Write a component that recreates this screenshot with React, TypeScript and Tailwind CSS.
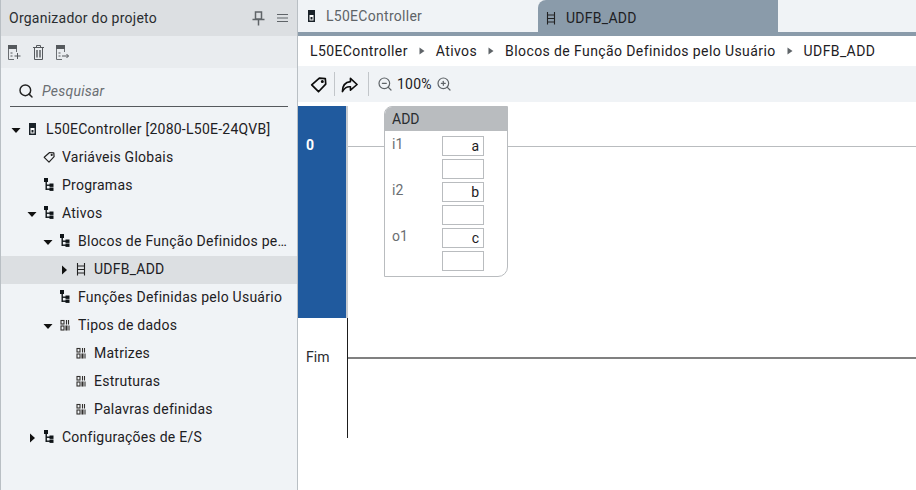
import { Search, ZoomIn, ZoomOut } from 'lucide-react'

function Caret({ dir }: { dir: 'down' | 'right' | 'none' }) {
  if (dir === 'none') return <span className="w-[16px] shrink-0" />
  return (
    <span className="w-[16px] shrink-0 flex items-center">
      <svg width="10" height="10" viewBox="0 0 10 10">
        {dir === 'down' ? <path d="M0.5 3h9L5 8z" fill="#111" /> : <path d="M3 0.5l5 4.5-5 4.5z" fill="#111" />}
      </svg>
    </span>
  )
}

function ControllerIcon() {
  return (
    <svg width="12" height="14" viewBox="0 0 12 14">
      <rect x="2" y="1" width="7" height="12" fill="#1a2229" />
      <rect x="3.5" y="6" width="4" height="5.5" fill="#fff" />
      <rect x="4.5" y="8" width="2" height="2.5" fill="#1a2229" />
    </svg>
  )
}

function TreeIcon() {
  return (
    <svg width="12" height="14" viewBox="0 0 12 14">
      <rect x="1" y="0" width="4" height="4" fill="#0f1418" />
      <rect x="2.5" y="4" width="1.4" height="8" fill="#0f1418" />
      <rect x="3" y="6.5" width="5" height="1.4" fill="#0f1418" />
      <rect x="3" y="10.5" width="5" height="1.4" fill="#0f1418" />
      <rect x="6.5" y="5.5" width="4" height="3.4" fill="#0f1418" />
      <rect x="6.5" y="9.5" width="4" height="3.4" fill="#0f1418" />
    </svg>
  )
}

function LadderIcon() {
  return (
    <svg width="12" height="14" viewBox="0 0 12 14" fill="none" stroke="#222" strokeWidth="1.1">
      <path d="M2.5 1v12.5M9.5 1v12.5M2.5 4h7M2.5 7.5h7M2.5 11h7" />
    </svg>
  )
}

function GridIcon() {
  return (
    <svg width="10" height="12" viewBox="0 0 10 12" fill="none" stroke="#33302e" strokeWidth="1.1">
      <rect x="1" y="1.5" width="3" height="3.5" />
      <path d="M6.5 1v4.5M8.5 1v4.5" />
      <rect x="1" y="7" width="3" height="4" />
      <rect x="6" y="7" width="1" height="4" />
      <path d="M9 6.5v5" />
    </svg>
  )
}

function TagSmall() {
  return (
    <svg width="14" height="14" viewBox="0 0 20 20" fill="none" stroke="#222" strokeWidth="2" strokeLinejoin="round">
      <path d="M2 10.5L11 2.5L18 3L18.5 9.5L10 18.5Z" />
      <circle cx="14.5" cy="6.5" r="0.8" fill="#222" />
    </svg>
  )
}

function TagOutline() {
  return (
    <svg width="17" height="17" viewBox="0 0 20 20" fill="none" stroke="#0c0c0c" strokeWidth="2" strokeLinejoin="round">
      <path d="M2 10.5L11 2.5L18 3L18.5 9.5L10 18.5Z" />
      <circle cx="14.5" cy="6.5" r="0.8" fill="#0c0c0c" />
    </svg>
  )
}

function ShareIcon() {
  return (
    <svg width="17" height="17" viewBox="0 0 18 18" fill="none" stroke="#0c0c0c" strokeWidth="1.7" strokeLinejoin="round">
      <path d="M10 2.5L17 9L10 15V11.5C6 11 3.5 13 1.5 16.5C1.5 10 5 6.5 10 6Z" />
    </svg>
  )
}

function PinIcon() {
  return (
    <svg width="13" height="15" viewBox="0 0 13 15" fill="none" stroke="#5f6468" strokeWidth="1.5">
      <path d="M3.5 1h6v7h-6zM0.5 8.5h12M6.5 8.5v6" />
    </svg>
  )
}

function MenuIcon() {
  return (
    <svg width="11" height="8" viewBox="0 0 11 8" stroke="#5f6468" strokeWidth="1">
      <path d="M0 0.5h11M0 4h11M0 7.5h11" />
    </svg>
  )
}

function DocIcon({ kind }: { kind: 'add' | 'export' }) {
  return (
    <svg width="13" height="15" viewBox="0 0 13 15" fill="none">
      <path d="M0.5 0.5h8v14h-8z" fill="#e9ecef" stroke="#6a6e72" />
      <rect x="0" y="0" width="9" height="4" fill="#55595d" />
      <path d="M2.5 8h2M2.5 11h2" stroke="#55595d" />
      <rect x="6" y="7" width="7" height="8" fill="#e9ecef" />
      {kind === 'add' ? (
        <path d="M6.5 11h6M9.5 8v6" stroke="#55595d" />
      ) : (
        <path d="M6 11h6.5M10.5 9l2 2-2 2" stroke="#55595d" />
      )}
    </svg>
  )
}

function TrashIcon() {
  return (
    <svg width="11" height="15" viewBox="0 0 11 15" fill="none" stroke="#55595d">
      <path d="M0 2.5h11M3.5 2V0.5h4V2" />
      <path d="M1.5 3v11.5h8V3" />
      <path d="M4 5v7.5M7 5v7.5" strokeWidth="1.4" />
    </svg>
  )
}

const rows = [
  { label: 'L50EController [2080-L50E-24QVB]', depth: 0, caret: 'down', icon: 'controller' },
  { label: 'Variáveis Globais', depth: 1, caret: 'none', icon: 'tag' },
  { label: 'Programas', depth: 1, caret: 'none', icon: 'tree' },
  { label: 'Ativos', depth: 1, caret: 'down', icon: 'tree' },
  { label: 'Blocos de Função Definidos pelo Usuário', depth: 2, caret: 'down', icon: 'tree' },
  { label: 'UDFB_ADD', depth: 3, caret: 'right', icon: 'ladder', selected: true },
  { label: 'Funções Definidas pelo Usuário', depth: 2, caret: 'none', icon: 'tree' },
  { label: 'Tipos de dados', depth: 2, caret: 'down', icon: 'grid' },
  { label: 'Matrizes', depth: 3, caret: 'none', icon: 'grid' },
  { label: 'Estruturas', depth: 3, caret: 'none', icon: 'grid' },
  { label: 'Palavras definidas', depth: 3, caret: 'none', icon: 'grid' },
  { label: 'Configurações de E/S', depth: 1, caret: 'right', icon: 'tree' },
] as const

const indents = ['pl-[10px]', 'pl-[26px]', 'pl-[42px]', 'pl-[58px]']

function RowIcon({ icon }: { icon: string }) {
  if (icon === 'controller') return <ControllerIcon />
  if (icon === 'tag') return <TagSmall />
  if (icon === 'tree') return <TreeIcon />
  if (icon === 'ladder') return <LadderIcon />
  return <GridIcon />
}

function Sidebar() {
  return (
    <div className="w-[298px] shrink-0 h-full flex flex-col bg-[#f0f3f6] border-l border-l-[#b9bfc4] border-r border-r-[#b9bfc4]">
      <div className="h-[36px] shrink-0 bg-[#dcdfe2] flex items-center pl-[8px] pr-[8px]">
        <span className="flex-1 text-[14px] tracking-[0.25px] text-[#2a2d30]">Organizador do projeto</span>
        <PinIcon />
        <span className="ml-[12px] mr-[1px] flex">
          <MenuIcon />
        </span>
      </div>
      <div className="h-[32px] shrink-0 bg-[#e9ecef] flex items-center pl-[7px] gap-[12px]">
        <DocIcon kind="add" />
        <TrashIcon />
        <DocIcon kind="export" />
      </div>
      <div className="mx-[9px] mt-[8px] h-[31px] shrink-0 flex items-center border-b border-[#55595d] pl-[8px] gap-[8px]">
        <Search size={16} strokeWidth={2.2} color="#222" />
        <span className="text-[14px] italic tracking-[0.25px] text-[#6a6e72]">Pesquisar</span>
      </div>
      <div className="mt-[9px]">
        {rows.map((row) => (
          <div
            key={row.label}
            className={`h-[28px] flex items-center pr-[8px] ${indents[row.depth]} ${'selected' in row ? 'bg-[#dcdfe2]' : ''}`}
          >
            <Caret dir={row.caret} />
            <span className="w-[12px] h-[14px] shrink-0 flex items-center justify-center mb-[2px]">
              <RowIcon icon={row.icon} />
            </span>
            <span className="ml-[7px] mb-[2px] text-[14px] tracking-[0.25px] text-[#1d2023] truncate">{row.label}</span>
          </div>
        ))}
      </div>
    </div>
  )
}

function Crumb({ text, last }: { text: string; last?: boolean }) {
  return (
    <>
      <span>{text}</span>
      {!last && (
        <svg width="6" height="8" viewBox="0 0 6 8" className="mx-[11px]">
          <path d="M0.5 0.5L5.5 4L0.5 7.5z" fill="#5f6468" />
        </svg>
      )}
    </>
  )
}

function Pins() {
  const pins = [
    { name: 'i1', value: 'a' },
    { name: 'i2', value: 'b' },
    { name: 'o1', value: 'c' },
  ]
  return (
    <div className="flex flex-col pt-[5px] pb-[5px] gap-[3px]">
      {pins.map((p) => (
        <div key={p.name} className="flex flex-col gap-[3px]">
          <div className="flex h-[20px]">
            <span className="w-[57px] pl-[7px] text-[14px] leading-[16px] text-[#6a6e72]">{p.name}</span>
            <span className="w-[42px] h-[20px] border border-[#b9bcbf] bg-white text-right pr-[4px] text-[14px] leading-[18px] text-[#1d2023]">
              {p.value}
            </span>
          </div>
          <div className="ml-[57px] w-[42px] h-[20px] border border-[#b9bcbf] bg-white" />
        </div>
      ))}
    </div>
  )
}

function Ladder() {
  return (
    <div className="flex-1 bg-white pt-[4px] flex flex-col">
      <div className="h-[212px] shrink-0 flex relative">
        <div className="w-[48px] h-full bg-[#205a9e] text-white font-bold text-[14px] pt-[31px] pl-[8px] leading-[16px]">0</div>
        <div className="w-[2px] h-full bg-[#c9ccd0]" />
        <div className="absolute left-[50px] right-0 top-[40px] h-px bg-[#b9bcbf]" />
        <div className="relative ml-[36px] w-[124px] h-[171px] self-start border border-[#b9bcbf] rounded-br-[10px] rounded-tl-[8px] bg-white">
          <div className="h-[24px] bg-[#b9bcbf] rounded-tl-[7px] px-[7px] text-[14px] leading-[24px] text-[#2a2d30]">ADD</div>
          <Pins />
        </div>
      </div>
      <div className="h-[120px] shrink-0 flex relative">
        <div className="w-[48px] pl-[8px] pt-[31px] text-[14px] leading-[16px] text-[#2a2d30]">Fim</div>
        <div className="w-px h-full bg-[#1d1d1d] ml-[1px]" />
        <div className="absolute left-[50px] right-0 top-[39px] h-[2px] bg-[#808080]" />
      </div>
    </div>
  )
}

export default function App() {
  return (
    <div className="w-[916px] h-[490px] flex overflow-hidden bg-white" style={{ fontFamily: 'Roboto, sans-serif' }}>
      <Sidebar />
      <div className="flex-1 min-w-0 flex flex-col">
        <div className="h-[36px] shrink-0 flex bg-[#f0f3f6] border-b-[4px] border-[#8a9baa] overflow-visible">
          <div className="w-[240px] flex items-center pl-[8px] gap-[8px] text-[14px] tracking-[0.28px] text-[#5f6468]">
            <ControllerIcon />
            <span>L50EController</span>
          </div>
          <div className="w-[240px] h-[36px] bg-[#8a9baa] rounded-tl-[8px] flex items-center pl-[7px] gap-[9px] text-[14px] tracking-[0.28px] text-[#1d2023]">
            <LadderIcon />
            <span>UDFB_ADD</span>
          </div>
        </div>
        <div className="h-[30px] shrink-0 flex items-center pl-[12px] text-[14px] tracking-[0.4px] text-[#1d2023]">
          <Crumb text="L50EController" />
          <Crumb text="Ativos" />
          <Crumb text="Blocos de Função Definidos pelo Usuário" />
          <Crumb text="UDFB_ADD" last />
        </div>
        <div className="h-[36px] shrink-0 bg-[#f0f3f6] flex items-center pl-[12px] text-[14px] tracking-[0.25px] text-[#1d2023]">
          <TagOutline />
          <span className="w-px h-[24px] bg-[#c2c6ca] ml-[7px] mr-[6px]" />
          <ShareIcon />
          <span className="w-px h-[24px] bg-[#c2c6ca] ml-[10px] mr-[8px]" />
          <ZoomOut size={16} strokeWidth={1.8} color="#5f6468" />
          <span className="ml-[4px] mr-[4px]">100%</span>
          <ZoomIn size={16} strokeWidth={1.8} color="#5f6468" />
        </div>
        <Ladder />
      </div>
    </div>
  )
}
